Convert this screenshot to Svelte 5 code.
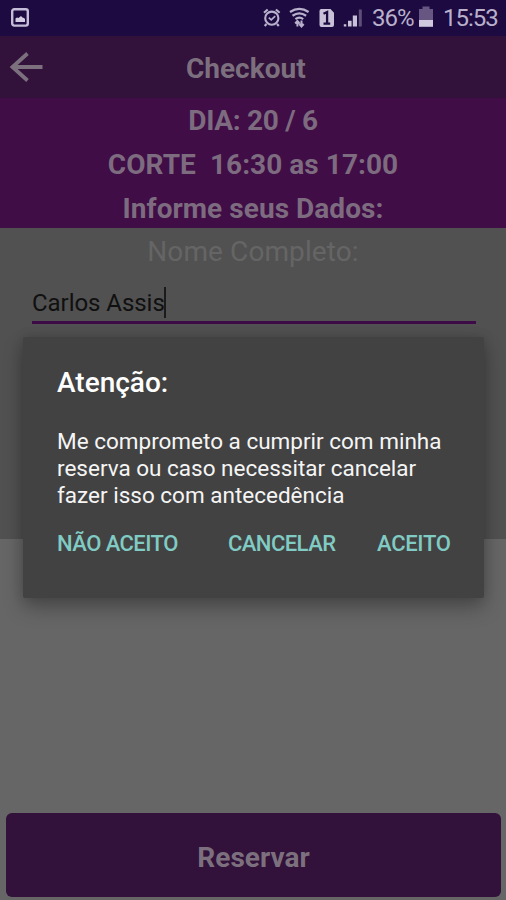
<script>
  const summary = ['DIA: 20 / 6', 'CORTE\u00a0 16:30 as 17:00', 'Informe seus Dados:'];
  const message = [
    'Me comprometo a cumprir com minha',
    'reserva ou caso necessitar cancelar',
    'fazer isso com antecedência'
  ];
</script>

<div class="screen">
  <div class="status">
    <svg class="photo" width="18" height="20" viewBox="0 0 18 20">
      <rect x="1.2" y="1.2" width="15.6" height="16.4" rx="2" fill="none" stroke="#c5bdd8" stroke-width="2.4" />
      <path d="M4.5 14V10.500l1.500-1 1.500 .5L10 8l1.500 1.500 1.500 .5 1 1v3z" fill="#d2cbe2" />
    </svg>
    <svg width="237" height="36" viewBox="260 0 237 36" class="indicators" fill="none" stroke="#b9b0cc">
      <circle cx="271.8" cy="18.2" r="6.6" stroke-width="2.1" />
      <path d="M264 12.8l3.7-3.3M279.6 12.8l-3.7-3.3M266.500 24l-1.800 2M277 24l1.800 2" stroke-width="2.2" />
      <path d="M268.8 17.7l2.4 2.2 4-3.8" stroke-width="1.7" />
      <path d="M290 12q9.300-6.200 18.600 0M292.500 15.700q6.800-4.800 13.600 0M295.400 19.100q3.900-3 7.800 0" stroke-width="2.3" />
      <path d="M297.4 26.500v-5M295.200 23.500l2.200-2.500 2.200 2.500M301.500 20.500v5M299.300 24l2.200 2.500 2.200-2.500" stroke-width="2" />
      <path d="M321 9h9.500l3.500 3.800V25a2 2 0 0 1-2 2h-10.500a2 2 0 0 1-2-2V11a2 2 0 0 1 1.500-2z" fill="#c9c1d8" stroke="none" />
      <path d="M323.500 13.800l3.600-1.800v12M323.500 23.600h6.700" stroke="#1c0a41" stroke-width="2.300" />
      <path d="M343.800 24.200h2.500v2.300h-2.500zM348 20.800h3.600v5.700H348zM352.800 15.500h4.200v11h-4.200z" fill="#c9c1d8" stroke="none" />
      <path d="M358.800 9.500h3v17h-3z" fill="#5e4e7a" stroke="none" />
      <path d="M419 9h3.500V6.500h7V9h3.500v11h-14z" fill="#665681" stroke="none" />
      <path d="M419 20h14v6.800h-14z" fill="#d0c9de" stroke="none" />
    </svg>
    <span class="percent">36%</span>
    <span class="clock">15:53</span>
  </div>

  <header>
    <svg width="34" height="32" viewBox="0 0 34 32" fill="none" stroke="#7c707f" stroke-width="3.800">
      <path d="M18.500 2.500L3.500 16l15 13.500M2.500 16H33.500" />
    </svg>
    <h1>Checkout</h1>
  </header>

  <section class="summary">
    {#each summary as line, i}
      <p class:day={i === 0}>{line}</p>
    {/each}
  </section>

  <section class="form">
    <div class="label"><span>Nome Completo:</span></div>
    <div class="field"><span class="value">Carlos Assis</span><i class="caret"></i></div>
  </section>

  <main></main>
  <footer><button><span>Reservar</span></button></footer>

  <div class="dialog" role="dialog" aria-label="Atenção">
    <h2>Atenção:</h2>
    <div class="message">
      {#each message as line}
        <p>{line}</p>
      {/each}
    </div>
    <div class="actions">
      <button class="no">NÃO ACEITO</button>
      <button class="cancel">CANCELAR</button>
      <button class="yes">ACEITO</button>
    </div>
  </div>
</div>

<style>
  .screen {
    position: relative;
    display: flex;
    flex-direction: column;
    width: 506px;
    height: 900px;
    overflow: hidden;
    background: #666;
    font-family: Roboto, "Liberation Sans", sans-serif;
  }
  h1, h2, p { margin: 0; }
  button { border: 0; padding: 0; background: none; font: inherit; text-align: left; }
  .status {
    display: flex;
    height: 36px;
    flex: none;
    background: #1c0a41;
    color: #b9b0cc;
    font-size: 24px;
    line-height: 37px;
    position: relative;
  }
  .photo { margin: 8px 0 0 11px; }
  .indicators { position: absolute; left: 260px; top: 0; }
  .percent { margin-left: 343px; width: 71px; white-space: nowrap; letter-spacing: -1px; }
  .clock { white-space: nowrap; letter-spacing: -1px; }
  header {
    display: flex;
    flex: none;
    align-items: center;
    height: 62px;
    padding-left: 9px;
    background: #32113a;
  }
  h1 { margin-left: 143px; padding-top: 4px; font-size: 28px; line-height: 58px; font-weight: 700; color: #7c707f; }
  .summary {
    flex: none;
    box-sizing: border-box;
    height: 130px;
    padding-top: 1px;
    background: #400d46;
    color: #7d6b80;
    font-size: 28px;
    font-weight: 700;
    line-height: 44px;
    text-align: center;
  }
  .summary p { height: 44px; white-space: pre; letter-spacing: 0.05px; }
  .summary .day { letter-spacing: -0.3px; }
  .form { flex: none; height: 311px; background: #515151; }
  .label { height: 48px; font-size: 28px; line-height: 48px; text-align: center; color: #656565; letter-spacing: 0.1px; }
  .field {
    display: flex;
    align-items: center;
    height: 48px;
    margin: 0 30px 0 32px;
    box-sizing: border-box;
    border-bottom: 3px solid #3d0b45;
    font-size: 24px;
    color: #101010;
  }
  .value { padding-top: 8px; letter-spacing: -0.05px; }
  .caret { width: 2px; height: 31px; margin: 8px 0 0 -1px; background: #1b1b1b; }
  main { flex: 1; }
  footer { flex: none; height: 87px; padding: 0 5px 0 6px; }
  footer button {
    width: 100%;
    height: 84px;
    padding-top: 4px;
    border-radius: 6px;
    background: #32113a;
    color: #7c707f;
    font-size: 28px;
    font-weight: 700;
    text-align: center;
  }
  .dialog {
    position: absolute;
    left: 23px;
    top: 337px;
    width: 461px;
    height: 261px;
    box-sizing: border-box;
    padding: 28px 34px 0;
    border-radius: 2px;
    background: #424242;
    box-shadow: 0 10px 20px rgba(0, 0, 0, 0.28), 0 0 12px rgba(0, 0, 0, 0.14);
    color: #f5f5f5;
  }
  h2 { font-size: 28px; line-height: 36px; font-weight: 500; color: #fff; }
  .message { margin-top: 27px; font-size: 22.5px; line-height: 27px; white-space: nowrap; }
  .actions {
    display: flex;
    margin-top: 18px;
    height: 32px;
    align-items: center;
    font-size: 22px;
    font-weight: 500;
  }
  .actions button { color: #80cbc4; white-space: nowrap; flex: none; letter-spacing: -0.55px; }
  .actions .no { width: 171px; }
  .actions .cancel { width: 149px; }
  .actions .yes { letter-spacing: -0.3px; }
</style>
